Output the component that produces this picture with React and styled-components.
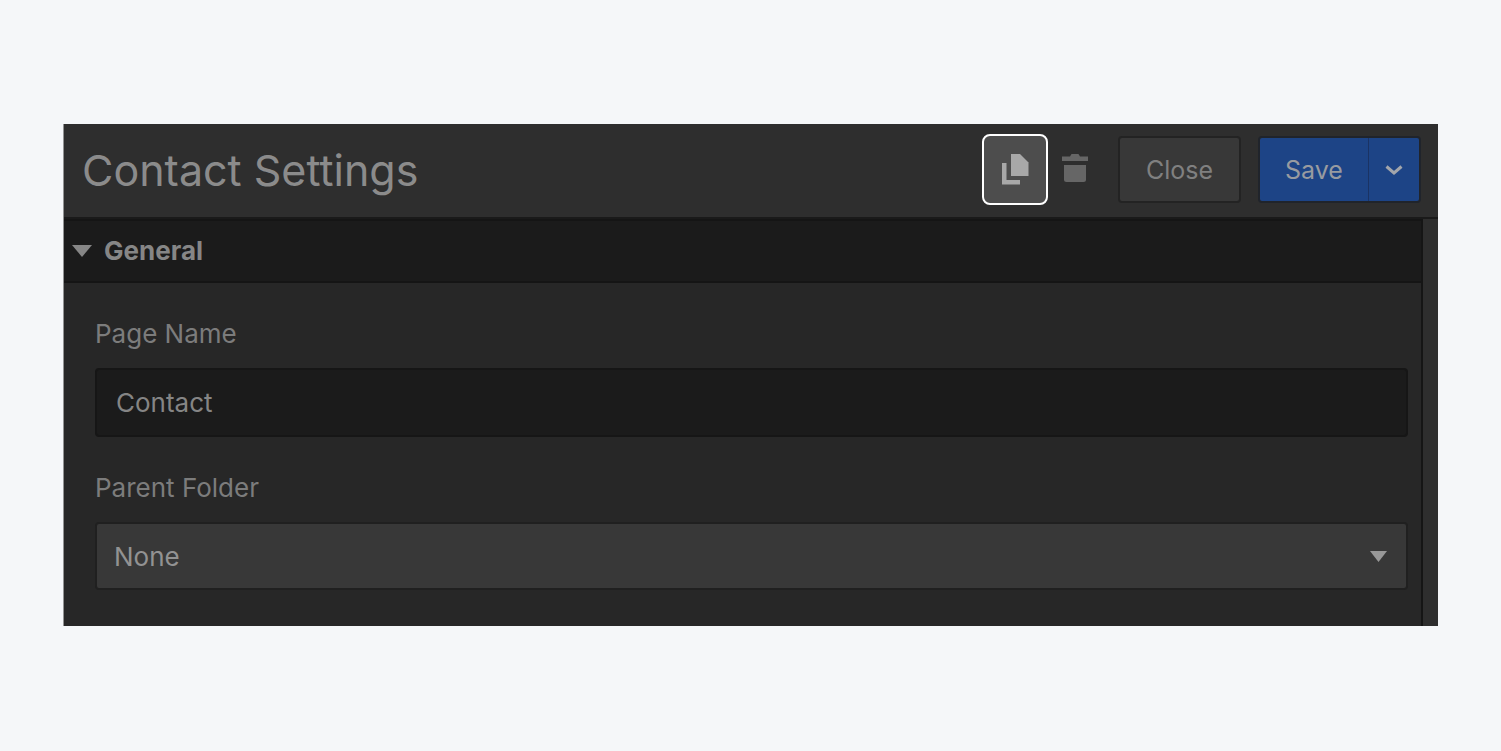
import { useState } from 'react'
import styled, { createGlobalStyle } from 'styled-components'

export default function App() {

    const [name, setName] = useState('Contact')
    const [folder, setFolder] = useState('none')
    const [open, setOpen] = useState(true)

    return (
        <Page>
            <GlobalStyle />
            <Panel>
                <Header>
                    <h1>Contact Settings</h1>
                    <DuplicateButton type='button' aria-label='Duplicate page'>
                        <svg width='27' height='31' viewBox='0 0 27 31' fill='#a8a8a8'>
                            <path d='M9 0h9l8.500 8.500V22H9z' />
                            <path d='M0 9h4.500v17H18v4.500H0z' />
                        </svg>
                    </DuplicateButton>
                    <DeleteButton type='button' aria-label='Delete page'>
                        <svg width='26' height='28' viewBox='0 0 26 28' fill='#666'>
                            <path d='M0 2.500h8L9.500 0h7L18 2.500h8V7H0z' />
                            <path d='M2 11h22v14.500a2.500 2.500 0 0 1-2.500 2.500h-17A2.500 2.500 0 0 1 2 25.500z' />
                        </svg>
                    </DeleteButton>
                    <CloseButton type='button'>Close</CloseButton>
                    <SaveGroup>
                        <SaveButton type='button'>Save</SaveButton>
                        <SaveMenuButton type='button' aria-label='More save options'>
                            <svg width='18' height='12' viewBox='0 0 18 12' fill='none' stroke='#a3a6ab' strokeWidth='3'>
                                <path d='M1.500 2.500l7.500 6.500 7.500-6.500' />
                            </svg>
                        </SaveMenuButton>
                    </SaveGroup>
                </Header>
                <Content>
                    <Main>
                        <SectionTitle>
                            <button type='button' aria-expanded={open} onClick={() => setOpen(!open)}>
                                <Arrow width='20' height='12' viewBox='0 0 20 12' fill='#868686'>
                                    <path d='M0 0h20L10 12z' />
                                </Arrow>
                                General
                            </button>
                        </SectionTitle>
                        {open ?
                            <Fields>
                                <Field>
                                    <label htmlFor='page-name'>Page Name</label>
                                    <Input id='page-name' type='text' value={name} onChange={e => setName(e.target.value)} />
                                </Field>
                                <Field>
                                    <label htmlFor='parent-folder'>Parent Folder</label>
                                    <SelectBox>
                                        <Select id='parent-folder' value={folder} onChange={e => setFolder(e.target.value)}>
                                            <option value='none'>None</option>
                                        </Select>
                                        <svg width='17' height='11' viewBox='0 0 17 11' fill='#989898'>
                                            <path d='M0 0h17L8.500 11z' />
                                        </svg>
                                    </SelectBox>
                                </Field>
                            </Fields>
                            :
                            ''
                        }
                    </Main>
                    <Gutter />
                </Content>
            </Panel>
        </Page>
    )
}

const GlobalStyle = createGlobalStyle`
    * {
        box-sizing: border-box;
    }

    body {
        margin: 0;
        background: #f5f7f9;
        font-family: Inter, "Liberation Sans", sans-serif;
    }

    h1, h2 {
        margin: 0;
    }

    button, input, select {
        font-family: inherit;
    }

    button {
        padding: 0;
        border: none;
        background: none;
        cursor: pointer;
    }
`

const Page = styled.div`
    padding: 124px 63px;
`

const Panel = styled.main`
    border-left: 1px solid #929394;
    background: #272727;
    font-size: 26px;
    line-height: 32px;
`

const Header = styled.header`
    display: flex;
    align-items: center;
    padding: 10px 17px 12px 18px;
    border-bottom: 2px solid #1a1a1a;
    background: #2e2e2e;

    h1 {
        flex: 1;
        color: #8b8b8b;
        font-size: 43px;
        font-weight: 400;
        line-height: 56px;
    }
`

const IconButton = styled.button`
    display: flex;
    align-items: center;
    justify-content: center;
`

const DuplicateButton = styled(IconButton)`
    width: 66px;
    height: 71px;
    border: 2px solid #fff;
    border-radius: 8px;
    background: #4d4d4d;
`

const DeleteButton = styled(IconButton)`
    width: 54px;
    height: 67px;
    padding-bottom: 3px;
`

const CloseButton = styled.button`
    width: 123px;
    height: 67px;
    margin-left: 16px;
    border: 2px solid #232323;
    border-radius: 4px;
    background: #383838;
    color: #808080;
    font-size: 25px;
`

const SaveGroup = styled.div`
    display: flex;
    width: 163px;
    height: 67px;
    margin-left: 17px;
    border: 2px solid #20242b;
    border-radius: 4px;
    background: #1d4486;
`

const SaveButton = styled.button`
    flex: 1;
    border-right: 1px solid #1a3364;
    color: #989ba0;
    font-size: 25px;
`

const SaveMenuButton = styled(IconButton)`
    width: 50px;
`

const Content = styled.div`
    display: flex;
`

const Main = styled.div`
    flex: 1;
    border-right: 2px solid #151515;
`

const Gutter = styled.div`
    width: 15px;
    background: #2e2e2e;
`

const SectionTitle = styled.h2`
    border-top: 2px solid #151515;
    border-bottom: 2px solid #151515;
    background: #1b1b1b;

    button {
        display: flex;
        align-items: center;
        width: 100%;
        padding: 14px 8px;
        color: #868686;
        font-size: 26px;
        font-weight: 700;
        line-height: 32px;
    }
`

const Arrow = styled.svg`
    margin-right: 12px;
`

const Fields = styled.div`
    display: flex;
    flex-direction: column;
    gap: 35px;
    padding: 35px 13px 36px 31px;
`

const Field = styled.div`
    display: flex;
    flex-direction: column;
    gap: 18px;

    label {
        color: #7c7c7c;
    }
`

const Input = styled.input`
    width: 100%;
    height: 69px;
    padding: 0 19px;
    border: 2px solid #161616;
    border-radius: 4px;
    background: #1b1b1b;
    color: #858585;
    font-size: 26px;
`

const SelectBox = styled.div`
    position: relative;

    svg {
        position: absolute;
        top: 29px;
        right: 21px;
        pointer-events: none;
    }
`

const Select = styled.select`
    display: block;
    width: 100%;
    height: 68px;
    padding: 0 17px;
    appearance: none;
    border: 2px solid #202020;
    border-radius: 4px;
    background: #383838;
    color: #929292;
    font-size: 26px;
`
